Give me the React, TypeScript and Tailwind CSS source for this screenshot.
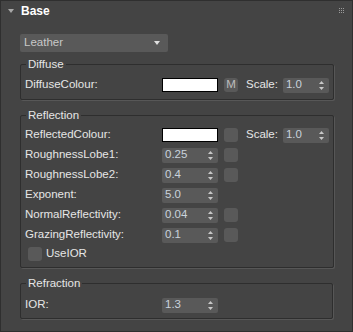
const font = { fontFamily: '"Liberation Sans", Arial, sans-serif' };

function Spinner({ value, w = "w-[56px]" }: { value: string; w?: string }) {
  return (
    <div className={`${w} h-[15px] bg-[#595959] rounded-[2px] flex items-center justify-between pl-[3px] pr-[5px]`}>
      <span className="text-[11.5px] leading-none text-[#c9d3dc]">{value}</span>
      <svg width="5" height="9" viewBox="0 0 5 9">
        <path d="M2.5 0 L5 3 L0 3 Z" fill="#c8c8c8" />
        <path d="M0 6 L5 6 L2.5 9 Z" fill="#c8c8c8" />
      </svg>
    </div>
  );
}

function Square({ children }: { children?: React.ReactNode }) {
  return (
    <div className="w-[14px] h-[14px] bg-[#595959] rounded-[3px] flex items-center justify-center text-[11.5px] leading-none text-[#bdbdbd]">
      {children}
    </div>
  );
}

function Swatch() {
  return <div className="w-[56px] h-[14px] bg-white border border-black" />;
}

function Row({ label, children }: { label: string; children?: React.ReactNode }) {
  return (
    <div className="h-[20px] flex items-center">
      <span className="w-[137px] text-[11.5px] text-[#e6e6e6]">{label}</span>
      <div className="flex items-center gap-[6px]">{children}</div>
    </div>
  );
}

function Group({ title, className, children }: { title: string; className?: string; children: React.ReactNode }) {
  return (
    <fieldset className={`w-[313px] border border-[#2e2e2e] rounded-[2px] shadow-[1px_1px_0_#575757] px-[4px] ${className ?? ""}`}>
      <legend className="ml-[1px] px-[2px] text-[11.5px] leading-[14px] text-[#e6e6e6]">{title}</legend>
      {children}
    </fieldset>
  );
}

export default function App() {
  return (
    <div style={font} className="w-[353px] h-[332px] bg-[#444444] border border-[#2f2f2f] relative overflow-hidden">
      <div className="absolute right-[8px] top-[7px] grid grid-cols-3 gap-[1px]">
        {Array.from({ length: 9 }).map((_, i) => (
          <div key={i} className="w-[1px] h-[1px] bg-[#9a9a9a]" />
        ))}
      </div>
      <div className="h-[20px] flex items-center pl-[7px]">
        <svg width="6" height="4" viewBox="0 0 6 4" className="mr-[7px]">
          <path d="M0 0 L6 0 L3 4 Z" fill="#a8a8a8" />
        </svg>
        <span className="text-[12px] font-bold text-white">Base</span>
      </div>
      <div className="pl-[19px] pt-[13px] flex flex-col">
        <div className="w-[148px] h-[18px] bg-[#595959] rounded-[2px] flex items-center justify-between pl-[4px] pr-[8px]">
          <span className="text-[11.5px] text-[#c8c8c8]">Leather</span>
          <svg width="6" height="4" viewBox="0 0 6 4">
            <path d="M0 0 L6 0 L3 4 Z" fill="#e0e0e0" />
          </svg>
        </div>
        <div className="mt-[5px] flex flex-col">
          <Group title="Diffuse" className="pt-[4px] pb-[4px]">
            <Row label="DiffuseColour:">
              <Swatch />
              <Square>M</Square>
              <span className="ml-[2px] text-[11.5px] text-[#e6e6e6]">Scale:</span>
              <div className="-ml-[1px]">
                <Spinner value="1.0" w="w-[46px]" />
              </div>
            </Row>
          </Group>
          <Group title="Reflection" className="mt-[8px] pt-[3px] pb-[4px]">
            <Row label="ReflectedColour:">
              <Swatch />
              <Square />
              <span className="ml-[2px] text-[11.5px] text-[#e6e6e6]">Scale:</span>
              <div className="-ml-[1px]">
                <Spinner value="1.0" w="w-[46px]" />
              </div>
            </Row>
            <Row label="RoughnessLobe1:">
              <Spinner value="0.25" />
              <Square />
            </Row>
            <Row label="RoughnessLobe2:">
              <Spinner value="0.4" />
              <Square />
            </Row>
            <Row label="Exponent:">
              <Spinner value="5.0" />
            </Row>
            <Row label="NormalReflectivity:">
              <Spinner value="0.04" />
              <Square />
            </Row>
            <Row label="GrazingReflectivity:">
              <Spinner value="0.1" />
              <Square />
            </Row>
            <div className="h-[18px] flex items-center pl-[3px] gap-[4px]">
              <Square />
              <span className="text-[11.5px] text-[#e6e6e6]">UseIOR</span>
            </div>
          </Group>
          <Group title="Refraction" className="mt-[8px] pt-[5px] pb-[3px]">
            <Row label="IOR:">
              <Spinner value="1.3" />
            </Row>
          </Group>
        </div>
      </div>
    </div>
  );
}
